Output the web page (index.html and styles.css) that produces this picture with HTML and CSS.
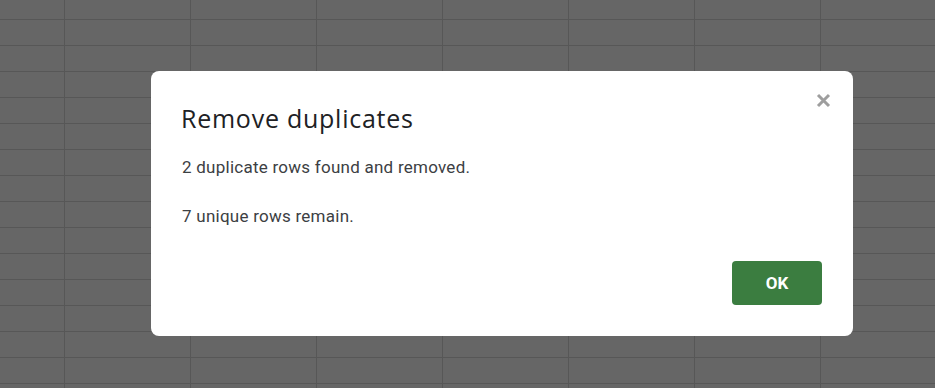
FILE: index.html
```html
<!DOCTYPE html>
<html lang="en">
<head>
<meta charset="utf-8">
<title>Remove duplicates</title>
<link rel="stylesheet" href="styles.css">
</head>
<body>
<div class="sheet">
  <div class="dialog" role="dialog" aria-labelledby="dlg-title">
    <button class="close" aria-label="Close">
      <svg width="15" height="15" viewBox="0 0 15 15" aria-hidden="true"><path d="M2 2 L13 13 M13 2 L2 13" stroke="#9e9e9e" stroke-width="3" stroke-linecap="butt"/></svg>
    </button>
    <h1 class="title" id="dlg-title">Remove duplicates</h1>
    <p class="msg">2 duplicate rows found and removed.</p>
    <p class="msg">7 unique rows remain.</p>
    <div class="actions">
      <button class="ok">OK</button>
    </div>
  </div>
</div>
</body>
</html>
```
FILE: styles.css
```css
html, body {
  margin: 0;
  padding: 0;
  height: 100%;
}
body {
  background-color: #666666;
  background-image:
    linear-gradient(to right, #575757 1px, transparent 1px),
    linear-gradient(to bottom, #575757 1px, transparent 1px);
  background-size: 126px 26px;
  background-position: 64px 19px;
  font-family: Roboto, "Liberation Sans", Arial, sans-serif;
  overflow: hidden;
}
.sheet {
  padding: 71px 0 0 151px;
}
.dialog {
  position: relative;
  box-sizing: border-box;
  width: 702px;
  height: 265px;
  background: #ffffff;
  border-radius: 8px;
  padding: 29px 31px 31px 30px;
  display: flex;
  flex-direction: column;
}
.close {
  position: absolute;
  top: 22px;
  right: 22px;
  width: 15px;
  height: 15px;
  padding: 0;
  border: 0;
  background: none;
  display: flex;
}
.title {
  margin: 0;
  font-family: "Open Sans", Roboto, sans-serif;
  font-weight: 400;
  font-size: 25px;
  letter-spacing: 0.75px;
  line-height: 36px;
  color: #202124;
}
.msg {
  margin: 19px 0 0 1px;
  font-size: 17px;
  letter-spacing: 0.25px;
  line-height: 24px;
  color: #3c4043;
}
.msg + .msg {
  margin-top: 25px;
}
.actions {
  margin-top: auto;
  display: flex;
  justify-content: flex-end;
}
.ok {
  width: 90px;
  height: 44px;
  border: 0;
  border-radius: 4px;
  background: #3b7d40;
  color: #ffffff;
  font-family: Roboto, "Liberation Sans", Arial, sans-serif;
  font-weight: 700;
  font-size: 17px;
  padding: 0;
}
```
